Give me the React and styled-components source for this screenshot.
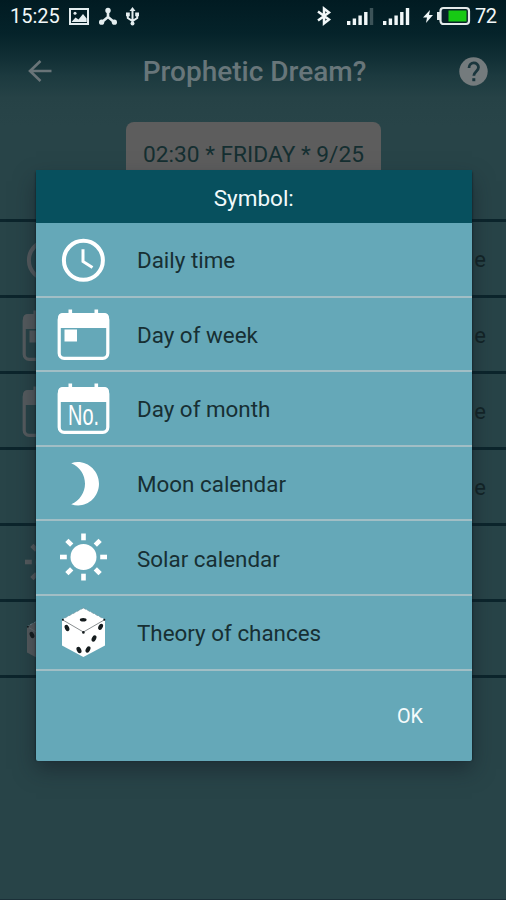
import React from 'react';
import styled, { createGlobalStyle } from 'styled-components';

const GlobalStyle = createGlobalStyle`
  * { box-sizing: border-box; }
  body { margin: 0; background: #284448; font-family: Roboto, sans-serif; }
`;

const Screen = styled.main`
  position: relative;
  width: 506px;
  height: 900px;
  overflow: hidden;
  background: linear-gradient(#011b22 0, #05232a 34px, #102e34 56px, #1c3a3f 76px, #264246 98px, #284448 125px);
  border-bottom: 1px solid #1b3038;
`;

const StatusBar = styled.header`
  display: flex;
  justify-content: space-between;
  height: 34px;
  padding: 0 8px 2px 10px;
  color: #f1f7f8;
  font-size: 20px;
  line-height: 32px;
`;

const StatusGroup = styled.div`
  display: flex;
  align-items: center;
`;

const StatusText = styled.span`
  display: block;
  width: ${(p) => p.$width}px;
  margin-left: ${(p) => p.$gap || 0}px;
  letter-spacing: ${(p) => p.$spacing || 0}px;
  white-space: nowrap;
`;

const Glyph = styled.svg`
  display: block;
  flex: none;
  margin-left: ${(p) => p.$gap || 0}px;
  overflow: visible;
`;

const Toolbar = styled.div`
  display: flex;
  align-items: center;
  justify-content: space-between;
  height: 74px;
  padding: 0 18px 0 28px;
`;

const Title = styled.h1`
  margin: 2px 0 0 -2px;
  color: #68767a;
  font-size: 28px;
  font-weight: 500;
  line-height: 34px;
  white-space: nowrap;
`;

const DateButton = styled.div`
  width: 255px;
  height: 65px;
  margin: 14px auto 32px 126px;
  border-radius: 8px;
  background: #5d5d5d;
  color: #152f31;
  font-size: 22.7px;
  line-height: 65px;
  text-align: center;
  white-space: nowrap;
`;

const BackList = styled.div`
  border-top: 3px solid #0c252c;
`;

const BackRow = styled.div`
  display: flex;
  align-items: center;
  justify-content: space-between;
  height: 76px;
  padding: 0 20px 0 22px;
  border-bottom: 3px solid #0c252c;
  color: #132427;
  font-size: 22px;
`;

const BackLabel = styled.span`
  padding-top: 2px;
`;

const Dialog = styled.section`
  position: absolute;
  left: 36px;
  top: 170px;
  width: 435.5px;
  height: 590.5px;
  background: #65a8b8;
  border-radius: 0 0 2px 2px;
  overflow: hidden;
`;

const DialogShadow = styled.div`
  position: absolute;
  left: 36px;
  top: 172px;
  width: 435.5px;
  height: 588px;
  box-shadow: 0 0 2px rgba(0, 15, 20, .8), 0 9px 20px rgba(20, 25, 35, .5);
`;

const DialogHeader = styled.h2`
  margin: 0;
  height: 53px;
  background: #07505e;
  color: #f2fafb;
  font-size: 22.5px;
  font-weight: 400;
  line-height: 57px;
  text-align: center;
`;

const Option = styled.div`
  display: flex;
  align-items: center;
  gap: 27px;
  height: 74.6px;
  padding-left: 21px;
  border-bottom: 2px solid #a1bec5;
  color: #172f33;
  font-size: 22.4px;
`;

const OptionLabel = styled.span`
  padding-top: 2px;
`;

const Actions = styled.footer`
  display: flex;
  justify-content: flex-end;
  padding: 33px 48.5px 0 0;
`;

const OkButton = styled.button`
  padding: 0;
  border: 0;
  background: none;
  color: #f5fbfc;
  font: 400 19.8px/26px Roboto, sans-serif;
`;

const SymbolSvg = styled.svg`
  display: block;
  flex: none;
  width: 53px;
  height: 56px;
  color: ${(p) => (p.$dim ? '#565c5f' : '#fff')};
`;

const NumberText = styled.text`
  font-family: "Liberation Sans", Arial, sans-serif;
  font-size: 29px;
  fill: currentColor;
`;

const CalendarFrame = () => (
  <>
    <rect x="2.2" y="8.7" width="48.6" height="43.6" rx="5" fill="none" stroke="currentColor" strokeWidth="3.2" />
    <path d="M1 22V12q0-5 5-5h41q5 0 5 5v10zM11.5 3.5h3.6V9h-3.6zm26 0h3.6V9h-3.6z" fill="currentColor" />
  </>
);

const drawings = {
  clock: (
    <g fill="none" stroke="currentColor">
      <circle cx="26.4" cy="29.3" r="19.5" strokeWidth="4" />
      <path d="M26 18.3v12.2l9.5 6" strokeWidth="3" />
    </g>
  ),
  week: (
    <g>
      <CalendarFrame />
      <rect x="7.5" y="23.5" width="12.5" height="12" fill="currentColor" />
    </g>
  ),
  month: <CalendarFrame />,
  moon: <path d="M14.2 8.2C28 3.5 42 14.5 42 28.8c0 15-14.5 25.5-27.8 20.4 8.6-3.7 13.8-12 13.8-20.5 0-8.8-5-17-13.8-20.5z" fill="currentColor" />,
  sun: (
    <g fill="currentColor">
      <circle cx="26.5" cy="27" r="13" />
      {[0, 45, 90, 135, 180, 225, 270, 315].map((angle) => (
        <rect key={angle} x="24.2" y="3.5" width="4.6" height="6.8" transform={`rotate(${angle} 26.5 27)`} />
      ))}
    </g>
  ),
  die: (
    <g>
      <path d="M26.4 4 48 15.5v26L26.4 53 5 41.5v-26z" fill="currentColor" />
      <path d="M5 15.5 26.4 28 48 15.5" fill="none" stroke="#697174" strokeWidth=".8" />
      <path d="M26.4 4 48 15.5M26.4 4 5 15.5" fill="none" stroke="#71949d" strokeWidth=".7" strokeDasharray="3 1.5" />
      <g fill="#151c1e">
        <ellipse cx="26.2" cy="15.8" rx="3.4" ry="1.8" />
        <ellipse cx="10" cy="24" rx="2.1" ry="3.3" transform="rotate(-26 10 24)" />
        <ellipse cx="22" cy="46" rx="2.2" ry="3.4" transform="rotate(-26 22 46)" />
        <ellipse cx="43.6" cy="22.8" rx="2.1" ry="3.3" transform="rotate(28 43.6 22.8)" />
        <ellipse cx="37" cy="34.5" rx="2.1" ry="3.3" transform="rotate(28 37 34.5)" />
        <ellipse cx="31" cy="45.6" rx="2.1" ry="3.4" transform="rotate(28 31 45.6)" />
        <circle cx="26.4" cy="28.4" r="1.3" /><circle cx="5.9" cy="15.8" r="1" /><circle cx="47.3" cy="15.8" r="1" />
      </g>
    </g>
  ),
};

const SymbolIcon = ({ name, dim }) => (
  <SymbolSvg viewBox="0 0 53 56" $dim={dim}>
    {drawings[name]}
    {name === 'month' && !dim && (
      <NumberText x="11" y="45.3" textLength="31" lengthAdjust="spacingAndGlyphs">No.</NumberText>
    )}
  </SymbolSvg>
);

const options = [
  { icon: 'clock', label: 'Daily time', tail: 'e' },
  { icon: 'week', label: 'Day of week', tail: 'e' },
  { icon: 'month', label: 'Day of month', tail: 'e' },
  { icon: 'moon', label: 'Moon calendar', tail: 'e' },
  { icon: 'sun', label: 'Solar calendar' },
  { icon: 'die', label: 'Theory of chances' },
];

const Signal = ({ faded, gap }) => (
  <Glyph $gap={gap} width="27" height="17" viewBox="0 0 27 17" fill="#f1f7f8">
    <rect x="0" y="13" width="3.4" height="4" />
    <rect x="5.7" y="10.5" width="3.4" height="6.5" />
    <rect x="11.4" y="7.5" width="3.4" height="9.5" />
    <rect x="17.1" y="4" width="3.4" height="13" />
    <rect x="22.8" y="0" width="3.4" height="17" fill={faded ? '#3c5358' : '#f1f7f8'} />
  </Glyph>
);

export default function App() {
  return (
    <>
      <GlobalStyle />
      <Screen>
        <StatusBar>
          <StatusGroup>
            <StatusText $width={50}>15:25</StatusText>
            <Glyph $gap={9} width="20" height="17" viewBox="0 0 20 17">
              <rect x="1" y="1" width="18" height="15" fill="none" stroke="#e4edef" strokeWidth="2" />
              <path d="m2.5 14 4-4.5 3 2 4.5-5.5 3.7 4.5V14z" fill="#e4edef" />
              <circle cx="6" cy="5.2" r="1.5" fill="#e4edef" />
            </Glyph>
            <Glyph $gap={10} width="18" height="17" viewBox="0 0 18 17" fill="none" stroke="#e4edef" strokeWidth="2.6">
              <path d="M9 2v7M9 9l-6 5M9 9l6 5" />
              <g fill="#e4edef" stroke="none"><circle cx="9" cy="2.5" r="2.7" /><circle cx="2.6" cy="14.2" r="2.6" /><circle cx="15.4" cy="14.2" r="2.6" /></g>
            </Glyph>
            <Glyph $gap={9} width="13" height="19" viewBox="0 0 13 19" fill="none" stroke="#e4edef" strokeWidth="2">
              <path d="M6.5 3v14M1.8 7v4l4.7 3 4.7-3V7" />
              <path d="m6.5 0 3 4h-6zM0 5.5h3.8v3.8H0zm9.2 0H13v3.8H9.2z" fill="#e4edef" stroke="none" />
              <circle cx="6.5" cy="16.6" r="2" fill="#e4edef" stroke="none" />
            </Glyph>
          </StatusGroup>
          <StatusGroup>
            <Glyph width="14" height="18" viewBox="0 0 14 18" fill="none" stroke="#f1f7f8" strokeWidth="2.5">
              <path d="m1 4.5 11 8L7 16.5V1.5l5 4-11 8" />
            </Glyph>
            <Signal faded gap={16} />
            <Signal gap={9.5} />
            <Glyph $gap={13} width="11" height="13" viewBox="0 0 11 13" fill="#f1f7f8"><path d="M7 0 0 7.5h4L3 13l7-8H6z" /></Glyph>
            <Glyph $gap={3} width="33" height="18" viewBox="0 0 33 18">
              <path d="M3 5H0v8h3z" fill="#e3e9e9" />
              <rect x="3.5" y="1" width="28.5" height="16" rx="3" fill="#082029" stroke="#e3e9e9" strokeWidth="2.2" />
              <rect x="11.5" y="3.5" width="18" height="11" fill="#17c914" />
            </Glyph>
            <StatusText $width={23} $gap={5} $spacing={-0.4}>72</StatusText>
          </StatusGroup>
        </StatusBar>
        <Toolbar>
          <Glyph width="24" height="22" viewBox="0 0 24 22" fill="none" stroke="#697478" strokeWidth="2.6"><path d="M23.5 11H2M12.5 1 2 11l10.5 10" /></Glyph>
          <Title>Prophetic Dream?</Title>
          <Glyph width="29" height="29" viewBox="0 0 29 29">
            <circle cx="14.5" cy="14.5" r="14.2" fill="#747b7d" />
            <path d="M10 11c0-6.8 9.5-6.4 9.5-.7 0 4-4.7 4.3-4.7 8.5" fill="none" stroke="#1a363d" strokeWidth="2.8" />
            <rect x="13.3" y="21.2" width="3" height="3" fill="#1a363d" />
          </Glyph>
        </Toolbar>
        <DateButton>02:30 * FRIDAY * 9/25</DateButton>
        <BackList>
          {options.map(({ icon, tail }) => (
            <BackRow key={icon}><SymbolIcon name={icon} dim />{tail && <BackLabel>{tail}</BackLabel>}</BackRow>
          ))}
        </BackList>
        <DialogShadow />
        <Dialog>
          <DialogHeader>Symbol:</DialogHeader>
          {options.map(({ icon, label }) => (
            <Option key={icon}><SymbolIcon name={icon} /><OptionLabel>{label}</OptionLabel></Option>
          ))}
          <Actions><OkButton>OK</OkButton></Actions>
        </Dialog>
      </Screen>
    </>
  );
}
